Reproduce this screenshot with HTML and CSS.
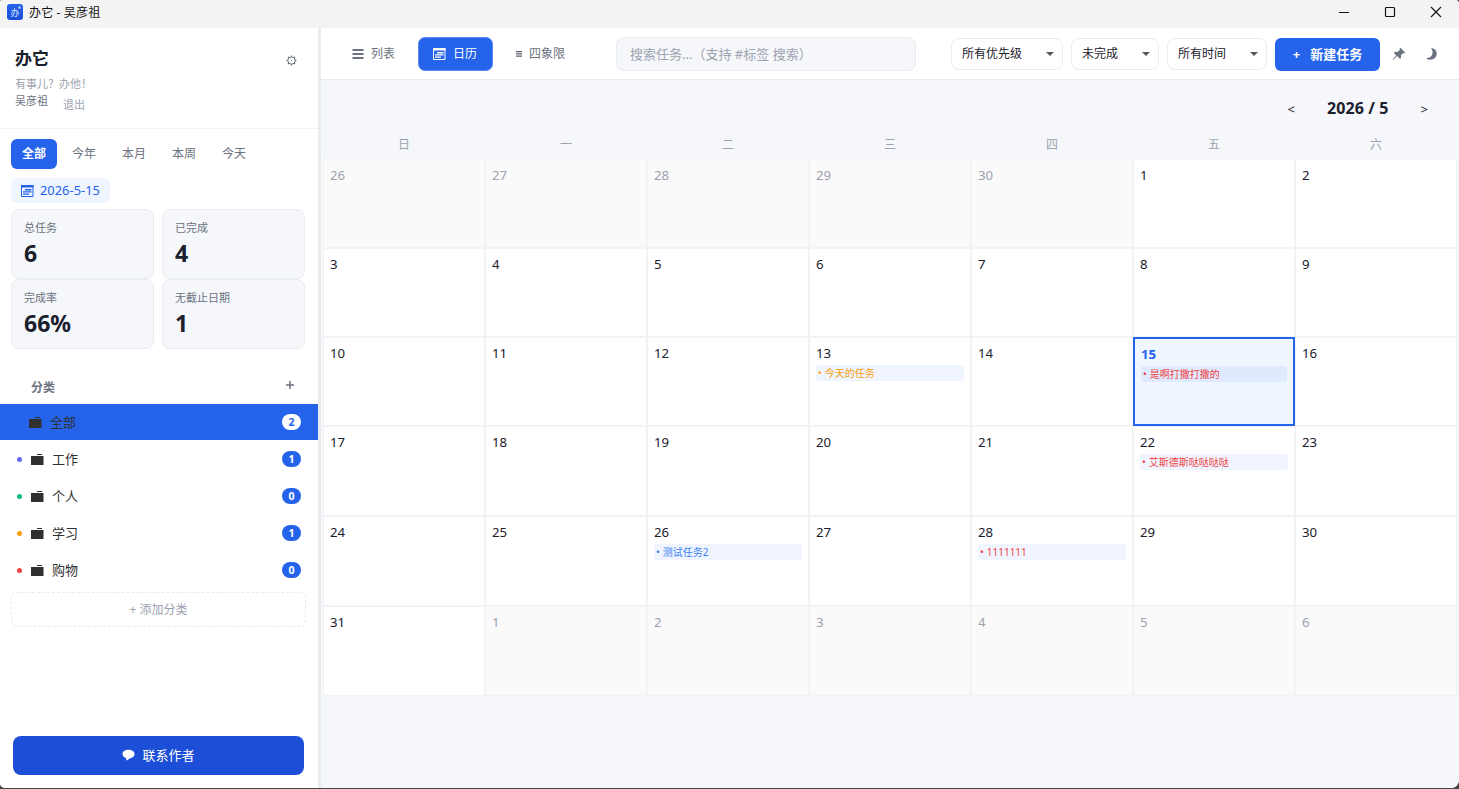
FILE: index.html
```
<!DOCTYPE html>
<html lang="zh-CN">
<head>
<meta charset="UTF-8" />
<meta name="viewport" content="width=device-width, initial-scale=1" />
<title>办它 - 吴彦祖</title>
<link rel="stylesheet" href="styles.css">
</head>
<body>
<svg class="defs" width="0" height="0">
  <symbol id="folder" viewBox="0 0 13 12"><path d="M6 1h5v1H6z M0 3h12.500v9H0z" fill="currentColor"/></symbol>
  <symbol id="cal" viewBox="0 0 13 12">
    <path d="M.5 .5h11.500v11H.5z" fill="none" stroke="currentColor"/>
    <path d="M0 0h12.500v2.500H0z M4 4h6.500v1.500H4z M2 6.200h8.500v1.300H2z M2 8.500h6v1.200H2z" fill="currentColor"/>
  </symbol>
</svg>
<div class="window">
  <header class="titlebar">
    <span class="app-icon">办<i></i></span>
    <span class="app-title">办它 - 吴彦祖</span>
    <div class="win-controls">
      <svg width="12" height="12"><path d="M1 6.500h10" stroke="#111"/></svg>
      <svg width="12" height="12"><rect x="1.500" y="1.500" width="9" height="9" rx="1" fill="none" stroke="#111" stroke-width="1.200"/></svg>
      <svg width="12" height="12"><path d="M1 1l10 10M11 1L1 11" stroke="#111" stroke-width="1.100"/></svg>
    </div>
  </header>

  <div class="app">
    <aside class="sidebar">
      <div class="side-head">
        <div>
          <h1>办它</h1>
          <p class="slogan">有事儿？办他！</p>
          <div class="user"><span>吴彦祖</span><a class="logout">退出</a></div>
        </div>
        <svg class="gear" width="11" height="11" viewBox="0 0 11 11" fill="none" stroke="#6b7280">
          <circle cx="5.500" cy="5.500" r="3.700"/>
          <path d="M5.500 .6v1.200M5.500 9.200v1.200M.6 5.500h1.200M9.200 5.500h1.200M2 2l1 1M8 8l1 1M9 2L8 3M3 8L2 9" stroke-width="1.300"/>
          <circle cx="5.500" cy="5.500" r=".6" fill="#6b7280" stroke="none"/>
        </svg>
      </div>

      <nav class="ranges">
        <button class="active">全部</button>
        <button>今年</button>
        <button>本月</button>
        <button>本周</button>
        <button>今天</button>
      </nav>
      <div class="date-pill"><svg width="13" height="12"><use href="#cal"/></svg><span>2026-5-15</span></div>

      <div class="stats">
        <div class="stat"><span>总任务</span><b>6</b></div>
        <div class="stat"><span>已完成</span><b>4</b></div>
        <div class="stat"><span>完成率</span><b>66%</b></div>
        <div class="stat"><span>无截止日期</span><b>1</b></div>
      </div>

      <div class="cat-head"><span>分类</span><svg width="10" height="10"><path d="M5 1v8M1 5h8" stroke="#6b7280" stroke-width="1.500"/></svg></div>
      <ul class="cats">
        <li class="active"><svg width="13" height="12"><use href="#folder"/></svg><span>全部</span><em>2</em></li>
        <li><i class="dot indigo"></i><svg width="13" height="12"><use href="#folder"/></svg><span>工作</span><em>1</em></li>
        <li><i class="dot green"></i><svg width="13" height="12"><use href="#folder"/></svg><span>个人</span><em>0</em></li>
        <li><i class="dot orange"></i><svg width="13" height="12"><use href="#folder"/></svg><span>学习</span><em>1</em></li>
        <li><i class="dot red"></i><svg width="13" height="12"><use href="#folder"/></svg><span>购物</span><em>0</em></li>
      </ul>
      <button class="add-cat">+ 添加分类</button>

      <button class="contact">
        <svg width="13" height="12" viewBox="0 0 13 12"><path d="M6.500 .8C10 .8 12.500 2.500 12.500 5S10 9.300 7.500 9.400C6.500 10.600 5 11.300 3.500 11.300c.8-.6 1-1.300.8-2.100C2 8.600 .5 7 .5 5 .5 2.500 3 .8 6.500 .8z" fill="#fff"/></svg>
        <span>联系作者</span>
      </button>
    </aside>

    <main class="main">
      <div class="toolbar">
        <div class="views">
          <button class="view"><svg width="12" height="12"><path d="M.5 2h11M.5 6h11M.5 10h11" stroke="#6b7280" stroke-width="1.800"/></svg>列表</button>
          <button class="view active"><svg width="13" height="12"><use href="#cal"/></svg>日历</button>
          <button class="view quad"><svg width="6" height="6"><path d="M0 .7h6M0 2.900h6M0 5.100h6" stroke="#5b6270" stroke-width="1.200"/></svg>四象限</button>
        </div>
        <input class="search" type="text" placeholder="搜索任务...（支持 #标签 搜索）">
        <div class="filters">
          <div class="select priority">所有优先级</div>
          <div class="select status">未完成</div>
          <div class="select time">所有时间</div>
        </div>
        <button class="new-task"><span class="plus">+</span>新建任务</button>
        <svg class="pin" width="14" height="14" viewBox="0 0 14 14"><path d="M8.300 .8l4.800 4.800-1 .8-1-.3-2.200 2.200.1 2.600-1.200.9-2.700-2.700L1.500 12.800l-.8.2.3-.8 3.300-3.700L1.900 6l1-1.200 2.700.1 2.300-2.200-.4-1z" fill="#6b7280"/></svg>
        <svg class="moon" width="13" height="14" viewBox="0 0 13 14"><path d="M6 1c4 .4 6 3 5.700 6.300C11.300 11 8 13.200 4.500 12.700 3 12.500 1.800 11.700 1.200 10.900 4 11.300 6.300 10 7.200 7.600 8 5.200 7.500 2.700 6 1z" fill="#6b7280"/></svg>
      </div>

      <div class="cal-nav"><span>&lt;</span><strong>2026 / 5</strong><span>&gt;</span></div>
      <div class="weekdays">
        <span>日</span><span>一</span><span>二</span><span>三</span><span>四</span><span>五</span><span>六</span>
      </div>
      <div class="grid">
        <div class="day other">26</div>
        <div class="day other">27</div>
        <div class="day other">28</div>
        <div class="day other">29</div>
        <div class="day other">30</div>
        <div class="day">1</div>
        <div class="day">2</div>

        <div class="day">3</div>
        <div class="day">4</div>
        <div class="day">5</div>
        <div class="day">6</div>
        <div class="day">7</div>
        <div class="day">8</div>
        <div class="day">9</div>

        <div class="day">10</div>
        <div class="day">11</div>
        <div class="day">12</div>
        <div class="day">13<p class="task mid">今天的任务</p></div>
        <div class="day">14</div>
        <div class="day today">15<p class="task high">是啊打撒打撒的</p></div>
        <div class="day">16</div>

        <div class="day">17</div>
        <div class="day">18</div>
        <div class="day">19</div>
        <div class="day">20</div>
        <div class="day">21</div>
        <div class="day">22<p class="task high">艾斯德斯哒哒哒哒</p></div>
        <div class="day">23</div>

        <div class="day">24</div>
        <div class="day">25</div>
        <div class="day">26<p class="task low">测试任务2</p></div>
        <div class="day">27</div>
        <div class="day">28<p class="task high">1111111</p></div>
        <div class="day">29</div>
        <div class="day">30</div>

        <div class="day">31</div>
        <div class="day other">1</div>
        <div class="day other">2</div>
        <div class="day other">3</div>
        <div class="day other">4</div>
        <div class="day other">5</div>
        <div class="day other">6</div>
      </div>
    </main>
  </div>
</div>
</body>
</html>
```
FILE: styles.css
```
* {
  box-sizing: border-box;
  margin: 0;
  padding: 0;
}
body {
  height: 100vh;
  overflow: hidden;
  background: #454545;
  font-family: "Noto Sans", "Noto Sans CJK SC", sans-serif;
  font-size: 12px;
  line-height: 16px;
  color: #1a202c;
}
button,
input {
  font: inherit;
  border: none;
  background: none;
}
svg {
  flex: none;
}
.defs {
  display: none;
}
.window {
  height: calc(100vh - 1px);
  display: flex;
  flex-direction: column;
  overflow: hidden;
  border-radius: 2px 4px 8px 5px;
  background: #fff;
}

/* title bar */
.titlebar {
  height: 28px;
  flex: none;
  display: flex;
  align-items: center;
  padding: 0 17px 4px 7px;
  background: #f3f3f3;
  color: #111;
}
.app-icon {
  width: 16px;
  height: 16px;
  margin-right: 6px;
  border-radius: 3px;
  background: linear-gradient(#2563eb, #1d4ed8);
  color: #dbe7ff;
  font-size: 9px;
  line-height: 17px;
  text-align: center;
  position: relative;
}
.app-title {
  padding-top: 2px;
  letter-spacing: .15px;
}
.app-icon i {
  position: absolute;
  top: 2px;
  right: 2px;
  width: 3px;
  height: 3px;
  border-radius: 50%;
  background: #93b8ff;
}
.win-controls {
  margin-left: auto;
  display: flex;
  gap: 34px;
}
.app {
  flex: 1;
  display: flex;
  min-height: 0;
}

/* sidebar */
.sidebar {
  width: 321px;
  flex: none;
  display: flex;
  flex-direction: column;
  border-right: 3px solid #e8ebf0;
  background: #fff;
}
.side-head {
  height: 101px;
  display: flex;
  justify-content: space-between;
  padding: 19px 21px 0 15px;
  border-bottom: 1px solid #eff1f5;
}
.side-head h1 {
  font-size: 17px;
  line-height: 24px;
}
.slogan {
  margin-top: 5px;
  font-size: 11px;
  line-height: 16px;
  color: #9ca3af;
}
.user {
  display: flex;
  gap: 15px;
  font-size: 11px;
  line-height: 18px;
  color: #6b7280;
}
.logout {
  padding-top: 4px;
  color: #9ca3af;
}
.gear {
  margin-top: 8px;
}
.ranges {
  display: flex;
  gap: 4px;
  margin: 10px 11px 0;
}
.ranges button {
  width: 46px;
  height: 30px;
  border-radius: 6px;
  color: #6b7280;
}
.ranges button.active {
  background: #2563eb;
  color: #fff;
  font-weight: bold;
}
.date-pill {
  width: 99px;
  height: 25px;
  display: flex;
  align-items: center;
  gap: 6px;
  margin: 9px 0 6px 11px;
  padding: 0 0 1px 10px;
  border-radius: 6px;
  background: #eff6ff;
  color: #2563eb;
  font-size: 12.9px;
}
.date-pill svg {
  margin-top: 1px;
}
.stats {
  display: grid;
  grid-template-columns: 143px 143px;
  column-gap: 8px;
  margin-left: 11px;
}
.stat {
  height: 70px;
  padding: 10px 12px;
  border: 1px solid #e8ebf0;
  border-radius: 8px;
  background: #f5f7fb;
}
.stat span {
  display: block;
  font-size: 11px;
  color: #6b7280;
}
.stat b {
  display: block;
  font-size: 23px;
  line-height: 34px;
}
.cat-head {
  display: flex;
  justify-content: space-between;
  margin-top: 31px;
  padding: 0 23px 0 31px;
  height: 24px;
  color: #6b7280;
  font-weight: bold;
}
.cats {
  list-style: none;
}
.cats li {
  height: 37px;
  display: flex;
  align-items: center;
  padding: 0 17px 1px;
  font-size: 13px;
  color: #303030;
}
.cats li.active {
  height: 36px;
  padding: 0 17px 0 29px;
  margin-bottom: 1px;
  background: #2563eb;
}
.cats span {
  margin-left: 8px;
  padding-bottom: 1px;
}
.cats li svg {
  margin-bottom: 1px;
}
.cats em {
  width: 19px;
  height: 16px;
  margin-left: auto;
  border-radius: 8px;
  background: #2563eb;
  color: #fff;
  font: bold 10.5px/16px "Noto Sans", sans-serif;
  text-align: center;
}
.cats .active em {
  background: #fff;
  color: #2563eb;
}
.dot {
  width: 5px;
  height: 5px;
  margin: 1px 9px 0 0;
  border-radius: 50%;
}
.indigo { background: #6366f1; }
.green { background: #10b981; }
.orange { background: #f59e0b; }
.red { background: #ef4444; }
.add-cat {
  height: 35px;
  margin: 3px 12px 0 11px;
  border: 1px dashed #e8eaed;
  border-radius: 6px;
  color: #9ca3af;
}
.contact {
  height: 39px;
  display: flex;
  align-items: center;
  justify-content: center;
  gap: 7px;
  margin: auto 14px 13px 13px;
  padding-bottom: 2px;
  border-radius: 8px;
  background: #1d4ed8;
  color: #fff;
  font-size: 13px;
}

/* toolbar */
.main {
  flex: 1;
  min-width: 0;
  background: #f5f7fb;
}
.toolbar {
  height: 52px;
  display: flex;
  align-items: center;
  padding-left: 16px;
  border-bottom: 1px solid #e8ebf0;
  background: #fff;
}
.views {
  display: flex;
  gap: 8px;
}
.view {
  height: 34px;
  display: flex;
  align-items: center;
  gap: 7px;
  padding: 0 15px;
  border-radius: 7px;
  color: #6b7280;
}
.view.active {
  width: 75px;
  border: 1px solid #5b8af0;
  padding: 0 14px;
  background: #2563eb;
  color: #fff;
}
.view.quad {
  padding-right: 16px;
}
.search {
  width: 300px;
  height: 34px;
  margin-left: 35px;
  padding: 0 13px;
  border: 1px solid #e8ebf0;
  border-radius: 8px;
  background: #f5f7fb;
  font-size: 13px;
}
.search::placeholder {
  color: #9ca3af;
}
.filters {
  display: flex;
  gap: 8px;
  margin: 0 8px 0 35px;
}
.select {
  height: 32px;
  display: flex;
  align-items: center;
  justify-content: space-between;
  padding: 0 8px 0 10px;
  border: 1px solid #e8ebf0;
  border-radius: 8px;
  background: #fff;
}
.select::after {
  content: "";
  border: 4px solid transparent;
  border-top-color: #555;
  border-bottom: 0;
}
.priority { width: 112px; }
.status { width: 88px; }
.time { width: 100px; }
.new-task {
  width: 105px;
  height: 33px;
  margin-top: 1px;
  border-radius: 6px;
  background: #2563eb;
  color: #fff;
  font-size: 13px;
  font-weight: bold;
}
.plus {
  margin-right: 10px;
}
.pin {
  margin-left: 12px;
}
.moon {
  margin-left: 19px;
}

/* calendar */
.cal-nav {
  height: 57px;
  display: flex;
  justify-content: flex-end;
  align-items: center;
  gap: 32px;
  padding-right: 31px;
  font-size: 13px;
}
.cal-nav strong {
  padding-bottom: 2px;
  font-size: 16px;
  letter-spacing: .1px;
}
.weekdays {
  display: grid;
  grid-template-columns: repeat(7, 162px);
  height: 22px;
  margin-left: 2px;
  color: #9ca3af;
  text-align: center;
}
.grid {
  display: grid;
  grid-template-columns: repeat(7, 162px);
  grid-template-rows: repeat(3, 89px) repeat(3, 90px);
  margin-left: 2px;
}
.day {
  min-width: 0;
  padding: 7px 6px;
  border: 1px solid #f1f3f5;
  background: #fff;
  font-size: 13.2px;
  line-height: 17px;
}
.day.other {
  background: #fafafa;
  color: #9ca3af;
}
.day.today {
  border: 2px solid #2563eb;
  background: #eff6ff;
  color: #2563eb;
  font-weight: bold;
}
.task {
  height: 16px;
  margin-top: 3px;
  padding-left: 2px;
  border-radius: 3px;
  background: #f0f4ff;
  font-size: 10px;
  font-weight: normal;
  line-height: 16px;
  white-space: nowrap;
}
.task::before {
  content: "•";
  margin-right: 3px;
}
.today .task {
  background: #e0eaff;
}
.high { color: #ef4444; }
.mid { color: #f59e0b; }
.low { color: #3b82f6; }
```
